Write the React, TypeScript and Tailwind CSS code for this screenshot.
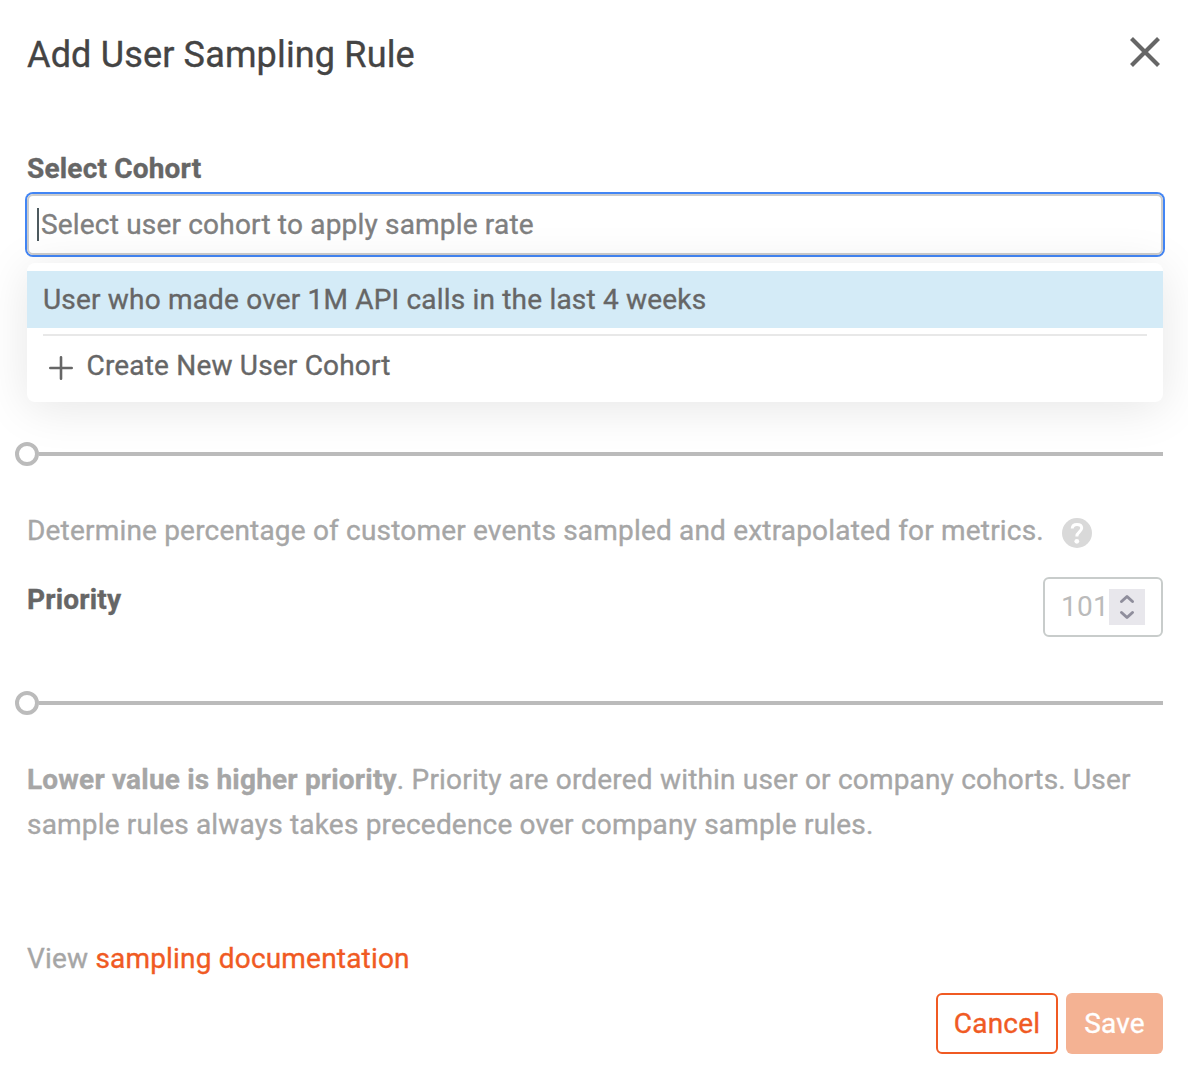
import React from "react";

function Slider() {
  return (
    <div className="-ml-3 flex h-6 items-center">
      <span className="size-6 shrink-0 rounded-full border-4 border-[#bbbbbb] bg-white" />
      <span className="h-1 flex-1 bg-[#bbbbbb]" />
    </div>
  );
}

function CohortMenu() {
  return (
    <div className="absolute inset-x-0 top-[69px] z-10 h-[139px] rounded-lg bg-white pt-2 text-[#666666] shadow-[0_6px_48px_rgba(0,0,0,0.10)]">
      <div className="h-[57px] bg-[#d4ebf7] px-4 leading-[57px]">User who made over 1M API calls in the last 4 weeks</div>
      <div className="mx-4 mt-1.5 h-0.5 bg-[#e8e8e8]" />
      <div className="flex h-[59px] items-center pl-[22px]">
        <svg className="mt-1 size-6 shrink-0" viewBox="0 0 24 24" stroke="currentColor" strokeWidth="2.6" strokeLinecap="round">
          <path d="M12 1.3v21.400M1.300 12h21.400" />
        </svg>
        <span className="ml-[13.5px]">Create New User Cohort</span>
      </div>
    </div>
  );
}

export default function App() {
  return (
    <div className="flex h-[1086px] w-[1188px] flex-col overflow-hidden bg-white px-[27px] pr-[25px] pt-[31px] font-[Roboto,sans-serif] text-[28px] leading-[45px] tracking-[0.185px] whitespace-nowrap text-[#a6a6a6] [-webkit-text-stroke:0.35px]">
      <header className="flex h-12 justify-between">
        <h1 className="text-[36px] leading-[48px] tracking-[0.16px] text-[#444444]">Add User Sampling Rule</h1>
        <button aria-label="Close" className="mt-[6px] mr-[3px] size-[30px] text-[#666666]">
          <svg className="size-full" viewBox="0 0 30 30" stroke="currentColor" strokeWidth="4.2">
            <path d="M1.500 1.500l27 27M28.500 1.500l-27 27" />
          </svg>
        </button>
      </header>

      <div className="mt-[67px] text-[#666666]">
        <label className="block h-12 font-bold">Select Cohort</label>
      </div>
      <div className="relative h-[61px]">
        <div className="flex h-full items-center rounded-md border-2 border-[#cccccc] pl-2 text-[#808080] ring-2 ring-[#4285f4]">
          <span className="h-[33px] w-0.5 bg-[#4d5a5f]" />
          <span className="ml-0.5">Select user cohort to apply sample rate</span>
        </div>
        <CohortMenu />
      </div>

      <div className="mt-[187px]">
        <Slider />
      </div>

      <div className="mt-[42px] flex h-[45px]">
        <p>Determine percentage of customer events sampled and extrapolated for metrics.</p>
        <svg className="mt-[10px] ml-[18px] size-[30px]" viewBox="0 0 30 30" fill="none">
          <circle cx="15" cy="15" r="15" fill="#d9d9d9" />
          <path d="M10.200 10.500C10.400 7.700 12.300 6.400 15 6.400c2.900 0 4.700 1.500 4.700 3.700 0 3.700-4.900 3.900-4.900 8.300" stroke="#fff" strokeWidth="3" />
          <circle cx="14.800" cy="23.300" r="2.400" fill="#fff" />
        </svg>
      </div>

      <div className="mt-[24px] flex h-[60px] justify-between">
        <span className="font-bold text-[#666666]">Priority</span>
        <div className="flex h-[60px] w-[120px] items-center rounded-md border-2 border-[#c8cccb] pl-4 text-[#bbbbbb]">
          <span className="w-12 pb-0.5 tracking-[0.3px] [-webkit-text-stroke:0]">101</span>
          <span className="flex size-9 items-center justify-center bg-[#e8e7ec] text-[#8f8e9c]">
            <svg className="size-9" viewBox="0 0 36 36" fill="none" stroke="currentColor" strokeWidth="3" strokeLinecap="round" strokeLinejoin="round">
              <path d="M12.500 12.500l5.500-5 5.500 5M12.500 23.500l5.500 5 5.500-5" />
            </svg>
          </span>
        </div>
      </div>

      <div className="mt-[54px]">
        <Slider />
      </div>

      <p className="mt-[42px]">
        <b>Lower value is higher priority</b>. Priority are ordered within user or company cohorts. User
        <br />
        sample rules always takes precedence over company sample rules.
      </p>

      <p className="mt-[89px]">
        View <a className="text-[#f05a23]">sampling documentation</a>
      </p>

      <footer className="mt-[12px] flex h-[61px] justify-end gap-2">
        <button className="w-[122px] rounded-md border-2 border-[#f05a23] text-[#f05a23]">Cancel</button>
        <button className="w-[97px] rounded-md bg-[#f4b293] text-white">Save</button>
      </footer>
    </div>
  );
}
